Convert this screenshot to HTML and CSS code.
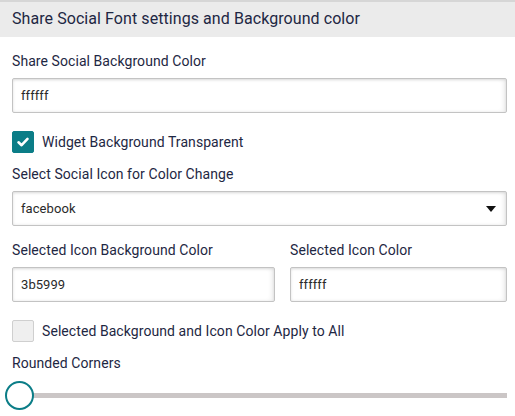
FILE: index.html
```html
<!DOCTYPE html>
<html>
<head>
<meta charset="utf-8">
<link rel="stylesheet" href="styles.css">
</head>
<body>
<div class="panel">
  <div class="panel-header">Share Social Font settings and Background color</div>
  <div class="panel-body">
    <div class="field">
      <label class="label">Share Social Background Color</label>
      <div class="input">ffffff</div>
    </div>
    <div class="check-row">
      <span class="checkbox checked">
        <svg width="14" height="14" viewBox="0 0 14 14"><path d="M2.5 7.3 L5.6 10.2 L11.5 3.9" fill="none" stroke="#fff" stroke-width="2.6" stroke-linecap="round" stroke-linejoin="round"/></svg>
      </span>
      <span class="check-label">Widget Background Transparent</span>
    </div>
    <div class="field field-tight">
      <label class="label">Select Social Icon for Color Change</label>
      <div class="input select">facebook<span class="caret"></span></div>
    </div>
    <div class="row">
      <div class="field col-left">
        <label class="label">Selected Icon Background Color</label>
        <div class="input">3b5999</div>
      </div>
      <div class="field col-right">
        <label class="label">Selected Icon Color</label>
        <div class="input">ffffff</div>
      </div>
    </div>
    <div class="check-row">
      <span class="checkbox"></span>
      <span class="check-label">Selected Background and Icon Color Apply to All</span>
    </div>
    <div class="field field-tight">
      <label class="label">Rounded Corners</label>
      <div class="slider">
        <span class="track"></span>
        <span class="thumb"></span>
      </div>
    </div>
  </div>
</div>
</body>
</html>
```
FILE: styles.css
```css
* { box-sizing: border-box; }
html, body { margin: 0; padding: 0; background: #fff; }
body {
  font-family: Roboto, "Liberation Sans", sans-serif;
  color: #1e2743;
  width: 515px;
  height: 416px;
  overflow: hidden;
  letter-spacing: 0.07px;
}
.panel-header {
  height: 37px;
  background: #ebebeb;
  border-top: 2px solid #d6d6d6;
  padding: 0 12px;
  font-size: 16px;
  line-height: 34px;
  color: #1e2743;
}
.panel-body {
  padding: 15px 8px 0 12px;
}
.field { display: flex; flex-direction: column; }
.label {
  display: block;
  font-size: 14px;
  line-height: 18px;
  margin-bottom: 8px;
}
.input {
  height: 35px;
  border: 1px solid #c3c3c3;
  border-radius: 2px;
  box-shadow: inset 0 1px 3px rgba(0,0,0,0.12), inset -3px 0 4px rgba(0,0,0,0.06);
  padding: 0 8px;
  font-size: 13px;
  line-height: 33px;
  color: #2a2a2a;
  background: #fff;
}
.select { position: relative; }
.caret {
  position: absolute;
  right: 10px;
  top: 14px;
  width: 0; height: 0;
  border-left: 5px solid transparent;
  border-right: 5px solid transparent;
  border-top: 6px solid #111;
}
.check-row {
  display: flex;
  align-items: center;
  gap: 8px;
  margin-top: 18px;
}
.checkbox {
  width: 22px;
  height: 22px;
  border-radius: 2px;
  border: 1px solid #cfcfcf;
  background: #efefef;
  display: flex;
  align-items: center;
  justify-content: center;
}
.checkbox.checked {
  background: #0b7d87;
  border-color: #0b7d87;
}
.check-label { font-size: 14px; line-height: 18px; }
.field-tight { margin-top: 12px; }
.row {
  display: flex;
  gap: 15px;
  margin-top: 15px;
}
.col-left { width: 263px; }
.col-right { flex: 1; }
.slider {
  position: relative;
  height: 28px;
  margin-top: 1px;
  margin-left: -7px;
}
.track {
  position: absolute;
  left: 20px;
  right: 0;
  top: 12px;
  height: 5px;
  background: #cbc6c6;
}
.thumb {
  position: absolute;
  left: 0;
  top: 0;
  width: 29px;
  height: 29px;
  border-radius: 50%;
  border: 2.5px solid #0b7d87;
  background: #fff;
}
```
